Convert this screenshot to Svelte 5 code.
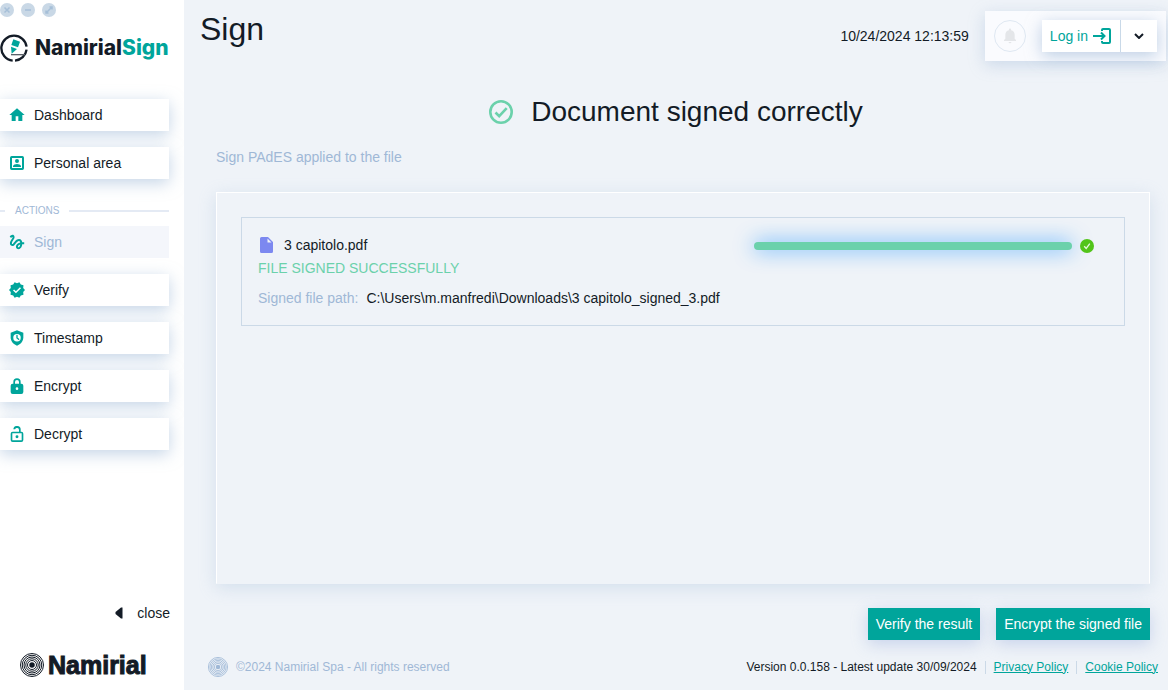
<script lang="ts">
    type Item = { label: string; icon: string };

    const mainItems: Item[] = [
        { label: 'Dashboard', icon: 'home' },
        { label: 'Personal area', icon: 'person' }
    ];

    const actions: Item[] = [
        { label: 'Sign', icon: 'sign' },
        { label: 'Verify', icon: 'verify' },
        { label: 'Timestamp', icon: 'time' },
        { label: 'Encrypt', icon: 'lock' },
        { label: 'Decrypt', icon: 'unlock' }
    ];

    let current = $state('Sign');

    const file = {
        name: '3 capitolo.pdf',
        path: 'C:\\Users\\m.manfredi\\Downloads\\3 capitolo_signed_3.pdf',
        progress: 100
    };
</script>

{#snippet icon(name: string)}
    <svg class="icon" viewBox="0 0 24 24" aria-hidden="true">
        {#if name === 'home'}
            <path d="M10 21v-7h4v7h6v-9h3.500L12 2 .5 12H4v9z" />
        {:else if name === 'person'}
            <path fill-rule="evenodd" d="M20 1.500H4A2.500 2.500 0 0 0 1.500 4v16A2.500 2.500 0 0 0 4 22.500h16a2.500 2.500 0 0 0 2.500-2.500V4A2.500 2.500 0 0 0 20 1.500zm-.5 18H4.500V4.500h15zM12 12a3 3 0 1 0 0-6 3 3 0 0 0 0 6zm6 6v-1.200c0-2-4-3.200-6-3.200s-6 1.200-6 3.200V18z" />
        {:else if name === 'sign'}
            <path
                class="gesture"
                d="M4.590 6.890c.7-.71 1.400-1.350 1.710-1.220.5.2 0 1.030-.3 1.520-.25.42-2.860 3.890-2.860 6.310 0 1.280.48 2.340 1.340 2.980.75.56 1.740.73 2.640.46 1.070-.31 1.950-1.400 3.060-2.770 1.210-1.490 2.830-3.440 4.080-3.440 1.630 0 1.650 1.010 1.760 1.790-3.780.64-5.380 3.670-5.380 5.370s1.440 3.090 3.210 3.090c1.630 0 4.290-1.330 4.690-6.100H21v-2.500h-2.470c-.15-1.650-1.090-4.200-4.030-4.200-2.250 0-4.180 1.910-4.940 2.840-.58.73-2.060 2.480-2.290 2.720-.25.3-.68.84-1.110.84-.45 0-.72-.83-.36-1.920.35-1.090 1.400-2.860 1.850-3.520.78-1.140 1.300-1.920 1.300-3.280C8.950 3.690 7.310 3 6.440 3 5.120 3 3.970 4 3.720 4.250c-.36.36-.66.66-.88.93zm9.290 11.660c-.31 0-.74-.26-.74-.72 0-.6.73-2.200 2.870-2.760-.3 2.690-1.430 3.480-2.130 3.480z"
            />
        {:else if name === 'verify'}
            <path d="m24 12-2.700-3.100.4-4.100-4-.9L15.600.4 12 2 8.400.4 6.300 3.900l-4 .9.400 4.100L0 12l2.700 3.100-.4 4.100 4 .9 2.100 3.500L12 22l3.600 1.600 2.100-3.500 4-.9-.4-4.100zm-13.600 5L6 12.700l1.600-1.600 2.800 2.800 6-6L18 9.500z" />
        {:else if name === 'time'}
            <path d="M12 .5 2.500 4.300V11c0 6 4 10.700 9.500 12.500C17.500 21.700 21.500 17 21.500 11V4.300z" />
            <circle cx="12" cy="11.500" r="5.600" class="hole" />
            <path class="hand" d="M12 8v4l2.500 2" />
        {:else if name === 'lock'}
            <path d="M18.500 8.500h-1V6a5.500 5.500 0 0 0-11 0v2.500h-1a3 3 0 0 0-3 3V21a3 3 0 0 0 3 3h13a3 3 0 0 0 3-3v-9.500a3 3 0 0 0-3-3zM12 18a2 2 0 1 1 0-4 2 2 0 0 1 0 4zm3-9.500H9V6a3 3 0 0 1 6 0z" />
        {:else if name === 'unlock'}
            <path d="M18.500 8.500h-1V6a5.500 5.500 0 0 0-11-1h2.700A3 3 0 0 1 15 6v2.500H5.500a3 3 0 0 0-3 3V21a3 3 0 0 0 3 3h13a3 3 0 0 0 3-3v-9.500a3 3 0 0 0-3-3zm.5 13H5V11h14zM12 18.300a2.200 2.200 0 1 0 0-4.400 2.200 2.200 0 0 0 0 4.400z" />
        {/if}
    </svg>
{/snippet}

{#snippet rings()}
    <svg class="rings" viewBox="0 0 48 48" aria-hidden="true">
        <circle cx="24" cy="24" r="5.500" class="dot" />
        {#each [9, 12.500, 16, 19.500, 23] as r}
            <circle cx="24" cy="24" {r} />
        {/each}
    </svg>
{/snippet}

{#snippet navButton(item: Item)}
    <button class="nav-item" class:active={current === item.label} onclick={() => (current = item.label)}>
        {@render icon(item.icon)}
        {item.label}
    </button>
{/snippet}

<div class="app">
    <aside>
        <div class="window-controls">
            <button aria-label="Close window">
                <svg viewBox="0 0 14 14"><path d="M4.500 4.500l5 5M9.500 4.500l-5 5" /></svg>
            </button>
            <button aria-label="Minimize window">
                <svg viewBox="0 0 14 14"><path d="M4 7h6" /></svg>
            </button>
            <button aria-label="Maximize window">
                <svg viewBox="0 0 14 14"><path d="M4.500 9.500l5-5M7.500 4H10v2.500M4 7.500V10h2.500" /></svg>
            </button>
        </div>

        <div class="brand">
            <svg class="brand-mark" viewBox="0 0 84 84" aria-hidden="true">
                <path class="ring" d="M45 79.900A38 38 0 0 0 79.700 47M79.700 38A38 38 0 0 0 4.300 38A38 38 0 0 0 38 79.800" />
                <path class="line" d="M33 62h42" />
                <path class="pen" d="M40 16l20 7-6 17-20-7zM33 38l18 7-16 14z" />
            </svg>
            <span>Namirial<b>Sign</b></span>
        </div>

        <nav>
            {#each mainItems as item}
                {@render navButton(item)}
            {/each}
            <div class="divider"><span>ACTIONS</span></div>
            {#each actions as item}
                {@render navButton(item)}
            {/each}
        </nav>

        <button class="collapse">
            <svg viewBox="0 0 8 12" aria-hidden="true"><path d="M7.500 .5v11H6L.5 7V5L6 .5z" /></svg>
            close
        </button>

        <div class="company">
            {@render rings()}
            <span>Namirial</span>
        </div>
    </aside>

    <main>
        <header>
            <h1>Sign</h1>
            <time>10/24/2024 12:13:59</time>
            <div class="account">
                <button class="bell" aria-label="Notifications">
                    <svg viewBox="0 0 24 24"><path d="M12 23a2.200 2.200 0 0 0 2.200-2H9.800A2.200 2.200 0 0 0 12 23zm7-7v-6c0-3.300-2-6-5.300-6.700V2.500a1.700 1.700 0 0 0-3.400 0v.8C7 4 5 6.700 5 10v6l-2 2v1.500h18V18z" /></svg>
                </button>
                <div class="login-group">
                    <button class="login">
                        Log in
                        <svg viewBox="0 0 18 16" aria-hidden="true"><path d="M9 3V2a1 1 0 0 1 1-1h6a1 1 0 0 1 1 1v12a1 1 0 0 1-1 1h-6a1 1 0 0 1-1-1v-1M0 8h11M8 4.500L11.500 8 8 11.500" /></svg>
                    </button>
                    <button class="more" aria-label="More options">
                        <svg viewBox="0 0 10 6"><path d="M1 1l4 4 4-4" /></svg>
                    </button>
                </div>
            </div>
        </header>

        <section class="result">
            <h2>
                <svg viewBox="0 0 24 24" aria-hidden="true">
                    <circle cx="12" cy="12" r="10.700" />
                    <path d="M6.500 12.500l3.700 3.700 7.500-8" />
                </svg>
                Document signed correctly
            </h2>
            <p class="hint">Sign PAdES applied to the file</p>

            <div class="panel">
                <article>
                    <div class="row">
                        <div class="file">
                            <svg viewBox="0 0 13 16" aria-hidden="true"><path d="M1.500 0H8l5 5v9.500a1.500 1.500 0 0 1-1.500 1.500h-10A1.500 1.500 0 0 1 0 14.500v-13A1.500 1.500 0 0 1 1.500 0zM7.500 1.500v4h4z" /></svg>
                            {file.name}
                        </div>
                        <div class="progress">
                            <div class="track">
                                <div class="bar" style="width: {file.progress}%"></div>
                            </div>
                            <svg viewBox="0 0 14 14" aria-hidden="true">
                                <circle cx="7" cy="7" r="7" />
                                <path d="M4.200 7.200l2 2.200 3.600-4.800" />
                            </svg>
                        </div>
                    </div>
                    <p class="status">FILE SIGNED SUCCESSFULLY</p>
                    <p class="path"><span>Signed file path:</span>{file.path}</p>
                </article>
            </div>

            <div class="buttons">
                <button>Verify the result</button>
                <button>Encrypt the signed file</button>
            </div>
        </section>

        <footer>
            <div class="copyright">
                {@render rings()}
                ©2024 Namirial Spa - All rights reserved
            </div>
            <div class="links">
                <span>Version 0.0.158 - Latest update 30/09/2024</span>
                <a href="#privacy">Privacy Policy</a>
                <a href="#cookie">Cookie Policy</a>
            </div>
        </footer>
    </main>
</div>

<style>
    :global(body) {
        margin: 0;
    }

    .app {
        display: flex;
        min-height: 100vh;
        background: #eff3f8;
        color: #131b26;
        font-family: 'Liberation Sans', Arial, sans-serif;
        font-size: 14px;
        line-height: 16px;
    }

    button {
        padding: 0;
        border: 0;
        background: none;
        color: inherit;
        font: inherit;
        cursor: pointer;
    }

    h1,
    h2,
    p {
        margin: 0;
        font-weight: 400;
    }

    svg {
        display: block;
        flex: none;
    }

    /* Sidebar */
    aside {
        display: flex;
        flex: none;
        flex-direction: column;
        box-sizing: border-box;
        width: 184px;
        overflow: hidden;
        background: #fff;
    }

    .window-controls {
        display: flex;
        gap: 7px;
        padding-top: 3px;
    }

    .window-controls button {
        width: 14px;
        height: 14px;
        border-radius: 50%;
        background: #c9d8e6;
    }

    .window-controls path {
        fill: none;
        stroke: #a6bfd8;
        stroke-width: 1.5;
    }

    .brand {
        display: flex;
        align-items: center;
        gap: 7px;
        margin: 17px 0 37px;
        font: 800 21px/28px Inter, sans-serif;
    }

    .brand b {
        color: #00a59b;
        font-weight: 800;
    }

    .brand-mark {
        width: 28px;
        height: 28px;
    }

    .brand-mark path {
        fill: none;
        stroke: #131b26;
        stroke-width: 7;
    }

    .brand-mark .line {
        stroke: #5b6068;
        stroke-width: 4;
    }

    .brand-mark .pen {
        fill: #00a59b;
        stroke: none;
    }

    nav {
        display: flex;
        flex-direction: column;
        gap: 16px;
        width: 169px;
    }

    .nav-item {
        display: flex;
        align-items: center;
        gap: 8px;
        height: 32px;
        padding-left: 8px;
        background: #fff;
        box-shadow: 0 4px 16px rgba(140, 172, 208, 0.5);
        text-align: left;
    }

    .nav-item.active {
        background: #f4f6fb;
        box-shadow: none;
        color: #9fb8d6;
    }

    .icon {
        width: 16px;
        height: 16px;
        margin: 0 1px;
        fill: #00a59b;
    }

    .icon .hole {
        fill: #fff;
    }

    .icon .gesture {
        transform: scale(1.2);
        transform-origin: 12px 12px;
    }

    .icon .hand {
        fill: none;
        stroke: #00a59b;
        stroke-width: 2;
        stroke-linecap: round;
    }

    .divider {
        display: flex;
        align-items: center;
        gap: 10px;
        margin-bottom: -8px;
        padding-top: 8px;
        height: 15px;
        color: #9fb8d6;
        font-size: 10px;
    }

    .divider::before,
    .divider::after {
        content: '';
        width: 5px;
        height: 2px;
        background: #e4eaf4;
    }

    .divider::after {
        flex: 1;
    }

    .collapse {
        display: flex;
        align-items: center;
        align-self: flex-end;
        gap: 14px;
        margin: auto 14px 28px 0;
    }

    .collapse svg {
        width: 8px;
        height: 12px;
        fill: #131b26;
    }

    .rings {
        fill: none;
        stroke: currentColor;
        stroke-width: 2;
    }

    .rings .dot {
        fill: currentColor;
        stroke: none;
    }

    .company {
        display: flex;
        align-items: center;
        gap: 4px;
        padding: 0 0 9px 20px;
        font: 700 25px/32px 'Liberation Sans', Arial, sans-serif;
        -webkit-text-stroke: 1px currentColor;
    }

    .company .rings {
        width: 24px;
        height: 24px;
    }

    /* Content */
    main {
        display: flex;
        flex: 1;
        flex-direction: column;
        min-width: 0;
    }

    header {
        display: flex;
        align-items: center;
        padding: 11px 2px 0 16px;
    }

    h1 {
        flex: 1;
        align-self: flex-start;
        font-size: 32px;
        line-height: 36px;
    }

    time {
        margin-right: 16px;
    }

    .account {
        display: flex;
        align-items: center;
        gap: 16px;
        height: 50px;
        padding: 0 9px;
        background: #fafbfe;
        box-shadow: 0 4px 16px rgba(150, 178, 212, 0.4);
    }

    .bell {
        display: grid;
        place-items: center;
        box-sizing: border-box;
        width: 32px;
        height: 32px;
        border: 1px solid #dfe8f2;
        border-radius: 50%;
    }

    .bell svg {
        width: 16px;
        height: 16px;
        fill: #e4e6e9;
    }

    .login-group {
        display: flex;
        height: 32px;
        background: #fff;
        box-shadow: 0 4px 16px rgba(150, 178, 212, 0.6);
    }

    .login {
        display: flex;
        align-items: center;
        gap: 5px;
        padding: 0 9px 0 8px;
        color: #00a59b;
    }

    .login-group svg {
        fill: none;
        stroke: currentColor;
        stroke-width: 2;
    }

    .login svg {
        width: 18px;
        height: 16px;
    }

    .more {
        display: grid;
        place-items: center;
        width: 37px;
        border-left: 1px solid #c9d9e8;
    }

    .more svg {
        width: 10px;
        height: 6px;
    }

    .result {
        display: flex;
        flex: 1;
        flex-direction: column;
        padding: 0 18px 0 32px;
    }

    h2 {
        display: flex;
        align-items: center;
        justify-content: center;
        gap: 18px;
        margin-top: 35px;
        padding-right: 14px;
        font-size: 28px;
        line-height: 32px;
    }

    h2 svg {
        width: 24px;
        height: 24px;
        fill: none;
        stroke: #6bd1ab;
        stroke-width: 2.600;
    }

    .hint {
        margin: 21px 0 27px;
        color: #9fb8d6;
    }

    .panel {
        flex: 1;
        padding: 24px;
        border: 1px solid #fff;
        border-bottom-color: #eff3f8;
        box-shadow: 0 4px 16px rgba(150, 178, 212, 0.3);
    }

    article {
        padding: 19px 16px;
        border: 1px solid #cbd9e7;
    }

    .row,
    .file,
    .progress {
        display: flex;
        align-items: center;
    }

    .row {
        justify-content: space-between;
        padding-right: 14px;
    }

    .file {
        gap: 11px;
        padding-left: 2px;
    }

    .file svg {
        width: 13px;
        height: 16px;
        fill: #7c88f0;
        fill-rule: evenodd;
    }

    .progress {
        gap: 8px;
        width: 340px;
        padding-top: 2px;
    }

    .track {
        flex: 1;
    }

    .bar {
        height: 8px;
        border-radius: 4px;
        background: #6bd1ab;
        box-shadow: 0 0 20px rgba(24, 144, 255, 0.8);
    }

    .progress svg {
        width: 14px;
        height: 14px;
        fill: #52c41a;
    }

    .progress path {
        fill: none;
        stroke: #e6f7de;
        stroke-width: 1.3;
    }

    .status {
        margin: 7px 0 14px;
        color: #6bd1ab;
    }

    .path span {
        margin-right: 8px;
        color: #9fb8d6;
    }

    .buttons {
        display: flex;
        justify-content: flex-end;
        gap: 16px;
        margin: 24px 0 15px;
    }

    .buttons button {
        height: 32px;
        padding: 0 8px;
        background: #00a59b;
        box-shadow: 0 4px 16px rgba(150, 170, 220, 0.45);
        color: #fff;
    }

    footer {
        display: flex;
        align-items: center;
        justify-content: space-between;
        padding: 0 10px 11px 24px;
        font-size: 12px;
    }

    .copyright,
    .links {
        display: flex;
        align-items: center;
    }

    .copyright {
        gap: 8px;
        height: 24px;
        color: #9fb8d6;
    }

    .copyright .rings {
        width: 20px;
        height: 20px;
    }

    .links {
        line-height: 13px;
    }

    .links a {
        margin-left: 8px;
        padding-left: 8px;
        border-left: 1px solid #cbd9e7;
        color: #00a59b;
    }
</style>
